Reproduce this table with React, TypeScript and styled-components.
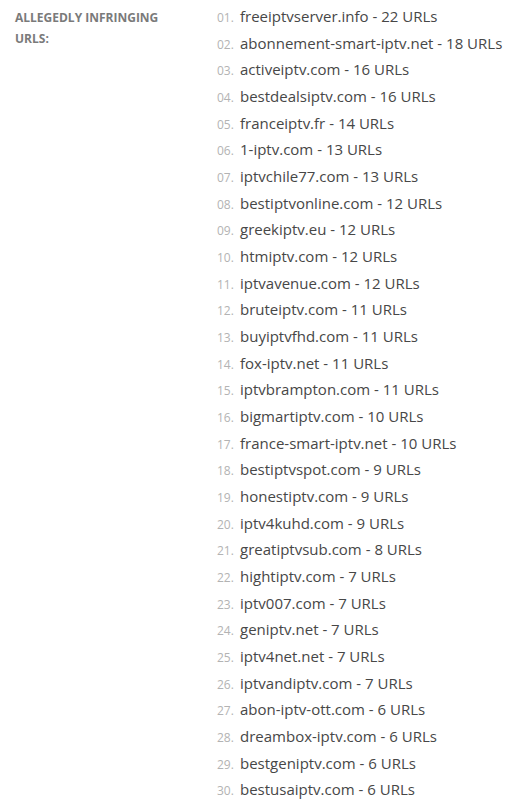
import React from "react";
import styled, { createGlobalStyle } from "styled-components";

const Global = createGlobalStyle`
  html, body { margin: 0; padding: 0; background: #ffffff; }
  body { font-family: "Open Sans", "Liberation Sans", sans-serif; }
`;

const Row = styled.div`
  display: grid;
  grid-template-columns: 202px 1fr;
  padding: 3px 0 0 15px;
`;

const Label = styled.div`
  font-size: 12px;
  font-weight: 700;
  line-height: 21px;
  color: #7a7a7a;
  text-transform: uppercase;
  padding-top: 4px;
  width: 160px;
`;

const List = styled.ol`
  list-style: none;
  margin: 0;
  padding: 0;
`;

const Item = styled.li`
  display: flex;
  align-items: baseline;
  font-size: 15px;
  line-height: 26.67px;
  color: #474747;
`;

const Num = styled.span`
  font-size: 12px;
  line-height: 1;
  color: #b3b3b3;
  width: 23px;
  flex: none;
`;

const data: [string, number][] = [
  ["freeiptvserver.info", 22],
  ["abonnement-smart-iptv.net", 18],
  ["activeiptv.com", 16],
  ["bestdealsiptv.com", 16],
  ["franceiptv.fr", 14],
  ["1-iptv.com", 13],
  ["iptvchile77.com", 13],
  ["bestiptvonline.com", 12],
  ["greekiptv.eu", 12],
  ["htmiptv.com", 12],
  ["iptvavenue.com", 12],
  ["bruteiptv.com", 11],
  ["buyiptvfhd.com", 11],
  ["fox-iptv.net", 11],
  ["iptvbrampton.com", 11],
  ["bigmartiptv.com", 10],
  ["france-smart-iptv.net", 10],
  ["bestiptvspot.com", 9],
  ["honestiptv.com", 9],
  ["iptv4kuhd.com", 9],
  ["greatiptvsub.com", 8],
  ["hightiptv.com", 7],
  ["iptv007.com", 7],
  ["geniptv.net", 7],
  ["iptv4net.net", 7],
  ["iptvandiptv.com", 7],
  ["abon-iptv-ott.com", 6],
  ["dreambox-iptv.com", 6],
  ["bestgeniptv.com", 6],
  ["bestusaiptv.com", 6],
];

export default function App() {
  return (
    <>
      <Global />
      <Row>
        <Label>Allegedly infringing URLs:</Label>
        <List>
          {data.map(([d, n], i) => (
            <Item key={d}>
              <Num>{String(i + 1).padStart(2, "0")}.</Num>
              <span>
                {d} - {n} URLs
              </span>
            </Item>
          ))}
        </List>
      </Row>
    </>
  );
}
